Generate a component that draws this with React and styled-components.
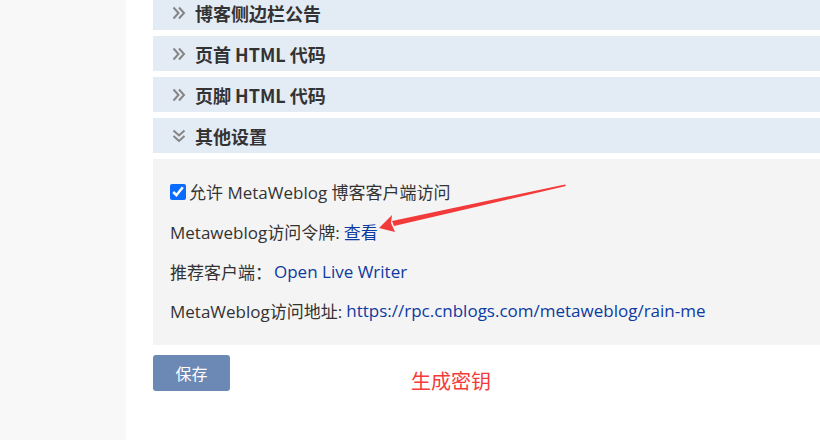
import React from "react";
import styled, { createGlobalStyle } from "styled-components";

const GlobalStyle = createGlobalStyle`
html, body {
  margin: 0;
  padding: 0;
  background: #fff;
  overflow: hidden;
}
body {
  font-family: "Open Sans", "Noto Sans CJK SC", sans-serif;
  color: #333;
}
`

const Page = styled.div`
display: flex;
width: 820px;
height: 440px;
position: relative;
overflow: hidden;
`
const Sidebar = styled.div`
width: 126px;
flex: 0 0 126px;
background: #f8f8f8;
`
const Main = styled.div`
flex: 1 1 0%;
padding: 0 0 0 27px;
margin-top: -5px;
`
const Section = styled.div`
display: flex;
align-items: center;
height: 35px;
background: #e3ebf5;
margin-bottom: 6px;
padding-left: 19px;
`
const Chevron = styled.svg`
width: 14px;
height: 14px;
margin-right: 9px;
flex: 0 0 auto;
`
const SectionTitle = styled.span`
font-family: "Noto Sans CJK SC", "Open Sans", sans-serif;
font-size: 18px;
font-weight: 700;
color: #333;
`
const Body = styled.div`
background: #f4f4f4;
height: 186px;
box-sizing: border-box;
padding: 13px 0 0 17px;
`
const Line = styled.div`
display: flex;
align-items: center;
height: 39.7px;
font-family: "Open Sans", "Noto Sans CJK SC", sans-serif;
font-size: 17px;
color: #333;
white-space: nowrap;
`
const Check = styled.input`
width: 16px;
height: 16px;
margin: 0 3px 0 0;
accent-color: #0a6cff;
`
const Link = styled.a`
color: #0d3a9f;
text-decoration: none;
margin-left: ${p => p.$gap || 0}px;
`
const Footer = styled.div`
display: flex;
align-items: flex-start;
padding-top: 10px;
`
const SaveButton = styled.button`
width: 77px;
height: 36px;
background: #6c88b4;
color: #fff;
border: none;
border-radius: 3px;
font-family: "Noto Sans CJK SC", sans-serif;
font-size: 16px;
cursor: pointer;
`
const Note = styled.span`
margin: 11px 0 0 181px;
font-family: "Noto Sans CJK SC", sans-serif;
font-size: 20px;
color: #f43a3a;
`
const Arrow = styled.svg`
position: absolute;
left: 0;
top: 0;
width: 820px;
height: 440px;
pointer-events: none;
`

function DoubleRight() {
  return (
    <Chevron viewBox="0 0 14 14">
      <path d="M1.5 1.5 L6.5 7 L1.5 12.5 M7 1.5 L12 7 L7 12.5" fill="none" stroke="#858585" strokeWidth="2" />
    </Chevron>
  )
}

function DoubleDown() {
  return (
    <Chevron viewBox="0 0 14 14">
      <path d="M1.5 1.5 L7 6.5 L12.5 1.5 M1.5 7 L7 12 L12.5 7" fill="none" stroke="#858585" strokeWidth="2" />
    </Chevron>
  )
}

export default function App() {
  return (
    <>
      <GlobalStyle />
      <Page>
        <Sidebar />
        <Main>
          <Section><DoubleRight /><SectionTitle>博客侧边栏公告</SectionTitle></Section>
          <Section><DoubleRight /><SectionTitle>页首 HTML 代码</SectionTitle></Section>
          <Section><DoubleRight /><SectionTitle>页脚 HTML 代码</SectionTitle></Section>
          <Section><DoubleDown /><SectionTitle>其他设置</SectionTitle></Section>
          <Body>
            <Line><Check type="checkbox" defaultChecked />允许 MetaWeblog 博客客户端访问</Line>
            <Line>Metaweblog访问令牌: <Link href="#" $gap={4}>查看</Link></Line>
            <Line>推荐客户端：<Link href="#" $gap={2}>Open Live Writer</Link></Line>
            <Line>MetaWeblog访问地址: <Link href="#" $gap={4}>https://rpc.cnblogs.com/metaweblog/rain-me</Link></Line>
          </Body>
          <Footer>
            <SaveButton>保存</SaveButton>
            <Note>生成密钥</Note>
          </Footer>
        </Main>
        <Arrow viewBox="0 0 820 440">
          <polygon points="565,184.5 566,186 394,226 392,221" fill="#f23a3a" />
          <polygon points="379,228 392,215 391,223 395,232" fill="#f23a3a" />
        </Arrow>
      </Page>
    </>
  )
}
